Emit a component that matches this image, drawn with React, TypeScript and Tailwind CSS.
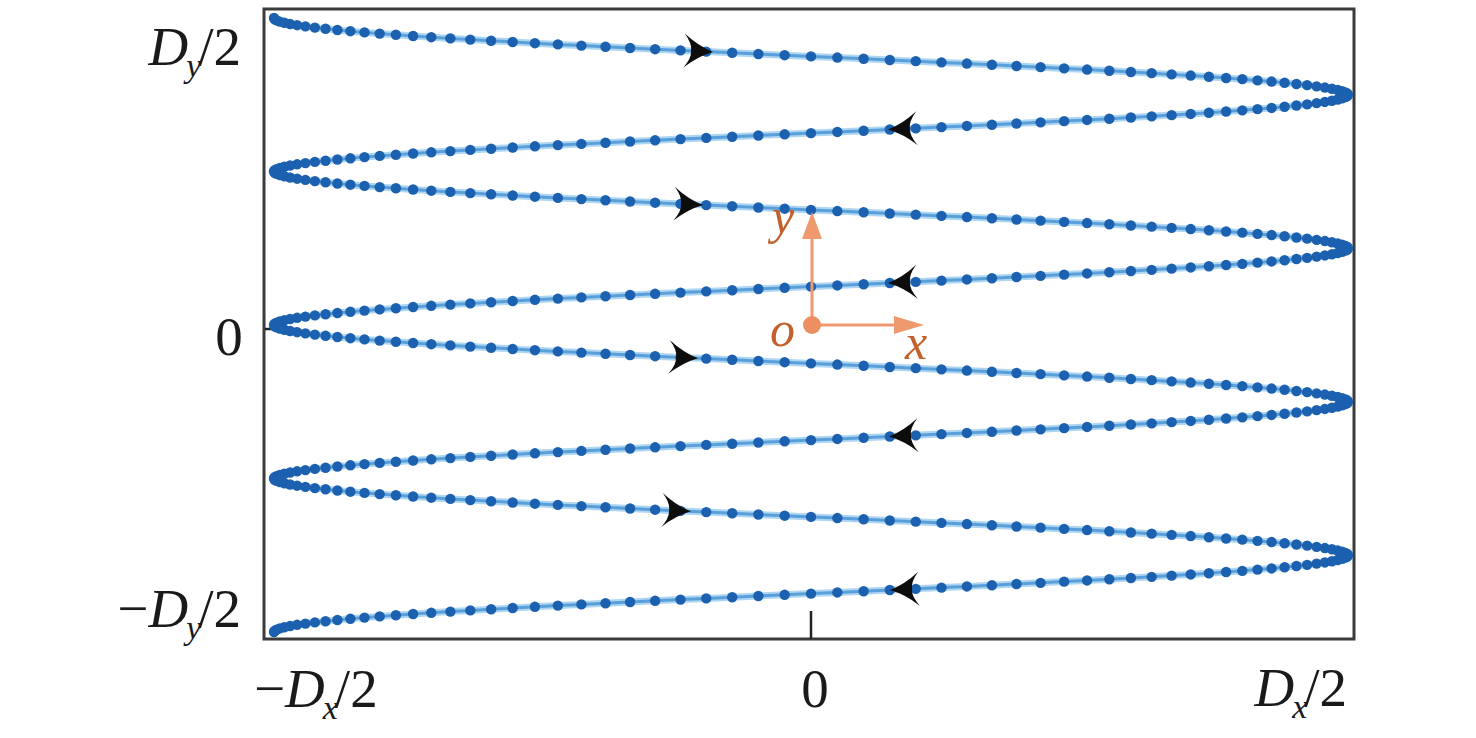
import React from "react";

const CX = 811;
const AMP = 537;
const Y0 = 18;
const HALF = 76.75;
const HALVES = 8;
const STEPS = 64;
const SERIF = '"Liberation Serif", "Times New Roman", serif';

const pointAt = (t: number) => {
  const x = CX - AMP * Math.cos(Math.PI * t);
  const y = Y0 + t * HALF;
  return { x, y };
};

// y on half period k where the curve passes a given x
const onLine = (k: number, x: number) => {
  const c = (CX - x) / AMP;
  const s = k % 2 === 0 ? Math.acos(c) / Math.PI : 1 - Math.acos(c) / Math.PI;
  return pointAt(k + s);
};

const Arrow = ({ k, x }: { k: number; x: number }) => {
  const p = onLine(k, x);
  const slope = (HALF / (AMP * Math.PI)) * (180 / Math.PI);
  const right = k % 2 === 0;
  const angle = right ? slope : 180 - slope;
  return (
    <path
      transform={`translate(${p.x} ${p.y}) rotate(${angle})`}
      d="M0 0 Q-15 -5 -29 -17 Q-21 -7 -22 0 Q-21 7 -29 17 Q-15 5 0 0Z"
      fill="#0d0d0d"
    />
  );
};

const Label = ({
  x,
  y,
  sub,
  neg,
  anchor = "start",
}: {
  x: number;
  y: number;
  sub: string;
  neg?: boolean;
  anchor?: "start" | "end";
}) => (
  <text x={x} y={y} fontSize={55} textAnchor={anchor} fill="#1a1a1a" fontFamily={SERIF}>
    {neg && <tspan>−</tspan>}
    <tspan fontStyle="italic">D</tspan>
    <tspan fontStyle="italic" fontSize={34} dy={12} dx={-2}>
      {sub}
    </tspan>
    <tspan dy={-12} dx={-3}>/2</tspan>
  </text>
);

export default function App() {
  const total = HALVES * STEPS;
  const pts = Array.from({ length: total + 1 }, (_, i) => pointAt(i / STEPS));
  const line = pts.map((p, i) => `${i ? "L" : "M"}${p.x.toFixed(1)} ${p.y.toFixed(1)}`).join(" ");

  return (
    <div className="w-[1476px] h-[738px] bg-white overflow-hidden" style={{ fontFamily: SERIF }}>
      <svg width={1476} height={738} viewBox="0 0 1476 738" className="block" fontFamily={SERIF}>
        {/* frame */}
        <rect x={264} y={9} width={1090} height={630} fill="none" stroke="#3b3b3b" strokeWidth={3} />
        <line x1={265} y1={329} x2={297} y2={329} stroke="#222" strokeWidth={2.5} />
        <line x1={811} y1={611} x2={811} y2={639} stroke="#222" strokeWidth={2.5} />

        {/* scan path */}
        <path d={line} fill="none" stroke="#8cc3ec" strokeWidth={7} strokeLinejoin="round" opacity={0.7} />
        <path d={line} fill="none" stroke="#4a96d6" strokeWidth={3} opacity={0.85} />
        {pts.map((p, i) => (
          <circle key={i} cx={p.x} cy={p.y} r={5.2} fill="#1c60b0" />
        ))}

        {/* direction arrows */}
        <Arrow k={0} x={713} />
        <Arrow k={2} x={703} />
        <Arrow k={4} x={698} />
        <Arrow k={6} x={691} />
        <Arrow k={1} x={888} />
        <Arrow k={3} x={888} />
        <Arrow k={5} x={889} />
        <Arrow k={7} x={890} />

        {/* local frame */}
        <g stroke="#ef9a6e" strokeWidth={3}>
          <line x1={812} y1={325} x2={812} y2={238} />
          <line x1={812} y1={325} x2={895} y2={325} />
        </g>
        <path d="M812 212 L802 239 L822 239Z" fill="#ef9a6e" />
        <path d="M924 325 L894 316 L894 334Z" fill="#ef9a6e" />
        <circle cx={812} cy={325} r={9} fill="#ec8f62" />
        <g fill="#c2612c" fontStyle="italic" fontSize={50} fontFamily={SERIF}>
          <text x={772} y={233}>y</text>
          <text x={770} y={346}>o</text>
          <text x={905} y={359}>x</text>
        </g>

        {/* axis labels */}
        <Label x={241} y={65} sub="y" anchor="end" />
        <text x={229} y={355} fontSize={55} textAnchor="middle" fill="#1a1a1a" fontFamily={SERIF}>0</text>
        <Label x={241} y={627} sub="y" neg anchor="end" />

        <Label x={254} y={707} sub="x" neg />
        <text x={815} y={707} fontSize={55} textAnchor="middle" fill="#1a1a1a" fontFamily={SERIF}>0</text>
        <Label x={1347} y={706} sub="x" anchor="end" />
      </svg>
    </div>
  );
}
